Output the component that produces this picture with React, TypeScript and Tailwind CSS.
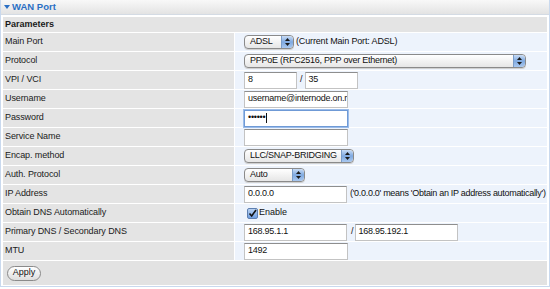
import React from "react";

const font = { fontFamily: '"Liberation Sans", Arial, sans-serif' };

function Stepper() {
  return (
    <div className="flex h-full w-[12px] shrink-0 flex-col items-center justify-center gap-[2px] rounded-r-[4px] border-l border-[#7a9cc8] bg-gradient-to-b from-[#c9dcf5] via-[#7fa9e0] to-[#a9c8f0]">
      <svg width="5" height="3" viewBox="0 0 5 3"><path d="M0 3 L2.5 0 L5 3Z" fill="#1a1a1a" /></svg>
      <svg width="5" height="3" viewBox="0 0 5 3"><path d="M0 0 L2.5 3 L5 0Z" fill="#1a1a1a" /></svg>
    </div>
  );
}

function Select({ w, text }: { w: string; text: string }) {
  return (
    <div className={`flex h-[14px] ${w} shrink-0 items-stretch rounded-[4px] border border-[#8a8a8a] bg-gradient-to-b from-white to-[#e6e6e6] shadow-[0_1px_0_#d0d0d0]`}>
      <div className="flex flex-1 items-center overflow-hidden whitespace-nowrap pl-[5px] text-[9px] tracking-[-0.25px] text-[#111]">{text}</div>
      <Stepper />
    </div>
  );
}

function Input({ w, value, focus }: { w: string; value?: string; focus?: boolean }) {
  return (
    <div
      className={`flex h-[17px] ${w} shrink-0 items-center overflow-hidden whitespace-nowrap bg-white pl-[3px] text-[9px] tracking-[-0.25px] text-[#111] ${
        focus
          ? "border border-[#6f9ad6] shadow-[0_0_0_1px_#9cbdea]"
          : "border border-[#c3c3c3] border-t-[#8e8e8e]"
      }`}
    >
      {value}
      {focus ? <span className="ml-[1px] h-[10px] w-[1px] bg-[#111]" /> : null}
    </div>
  );
}

function Row({ label, children }: { label: string; children?: React.ReactNode }) {
  return (
    <div className="flex h-[18px] gap-[1px]">
      <div className="flex w-[231px] shrink-0 items-center bg-[#e4e4e4] pl-[2px] text-[9px] tracking-[-0.1px] text-[#1a1a1a]">{label}</div>
      <div className="flex min-w-0 flex-1 items-center bg-[#edf3fc] pl-[9px] text-[9px] text-[#111]">{children}</div>
    </div>
  );
}

export default function App() {
  return (
    <div className="h-[289px] w-[550px] overflow-hidden bg-white" style={font}>
      <div className="flex h-[287px] flex-col border-x border-b border-[#c9d9ee]">
        <div className="flex h-[15px] items-center gap-[2px] border-b border-[#d4dbe4] bg-gradient-to-b from-[#f8f8f8] to-[#e3e3e3] pl-[3px]">
          <svg width="6" height="4" viewBox="0 0 6 4"><path d="M0 0 L6 0 L3 4Z" fill="#2a6fc4" /></svg>
          <span className="text-[9.5px] font-bold text-[#2a6fc4]">WAN Port</span>
        </div>
        <div className="flex flex-col gap-[1px] px-[2px] pt-[2px]">
          <div className="flex h-[15px] items-center bg-[#e4e4e4] pl-[2px] text-[9px] font-bold text-[#1a1a1a]">Parameters</div>
          <Row label="Main Port">
            <Select w="w-[50px]" text="ADSL" />
            <span className="ml-[2px] whitespace-nowrap tracking-[-0.15px]">(Current Main Port: ADSL)</span>
          </Row>
          <Row label="Protocol">
            <Select w="w-[282px]" text="PPPoE (RFC2516, PPP over Ethernet)" />
          </Row>
          <Row label="VPI / VCI">
            <Input w="w-[53px]" value="8" />
            <span className="ml-[3px] mr-[2px]">/</span>
            <Input w="w-[53px]" value="35" />
          </Row>
          <Row label="Username">
            <Input w="w-[104px]" value="username@internode.on.r" />
          </Row>
          <Row label="Password">
            <Input
              w="w-[104px]"
              focus
              value={"\u2022\u2022\u2022\u2022\u2022\u2022"}
            />
          </Row>
          <Row label="Service Name">
            <Input w="w-[104px]" />
          </Row>
          <Row label="Encap. method">
            <Select w="w-[110px]" text="LLC/SNAP-BRIDGING" />
          </Row>
          <Row label="Auth. Protocol">
            <Select w="w-[61px]" text="Auto" />
          </Row>
          <Row label="IP Address">
            <Input w="w-[103px]" value="0.0.0.0" />
            <span className="ml-[3px] whitespace-nowrap tracking-[-0.3px]">('0.0.0.0' means 'Obtain an IP address automatically')</span>
          </Row>
          <Row label="Obtain DNS Automatically">
            <div className="ml-[3px] flex h-[11px] w-[11px] shrink-0 items-center justify-center rounded-[2px] border border-[#5d7fb0] bg-gradient-to-b from-[#b9d2f2] to-[#6f9ee0]">
              <svg width="9" height="9" viewBox="0 0 9 9"><path d="M1.5 4.5 L3.7 7 L8 1" stroke="#111" strokeWidth="1.6" fill="none" /></svg>
            </div>
            <span className="ml-[1px]">Enable</span>
          </Row>
          <Row label="Primary DNS / Secondary DNS">
            <Input w="w-[103px]" value="168.95.1.1" />
            <span className="ml-[4px] mr-[1px]">/</span>
            <Input w="w-[103px]" value="168.95.192.1" />
          </Row>
          <Row label="MTU">
            <Input w="w-[104px]" value="1492" />
          </Row>
          <div className="flex h-[24px] items-center bg-[#e2e2e2] pl-[4px]">
            <div className="flex h-[15px] w-[34px] items-center justify-center rounded-full border border-[#8a8a8a] bg-gradient-to-b from-white to-[#dedede] text-[9px] text-[#111]">
              Apply
            </div>
          </div>
        </div>
      </div>
    </div>
  );
}
